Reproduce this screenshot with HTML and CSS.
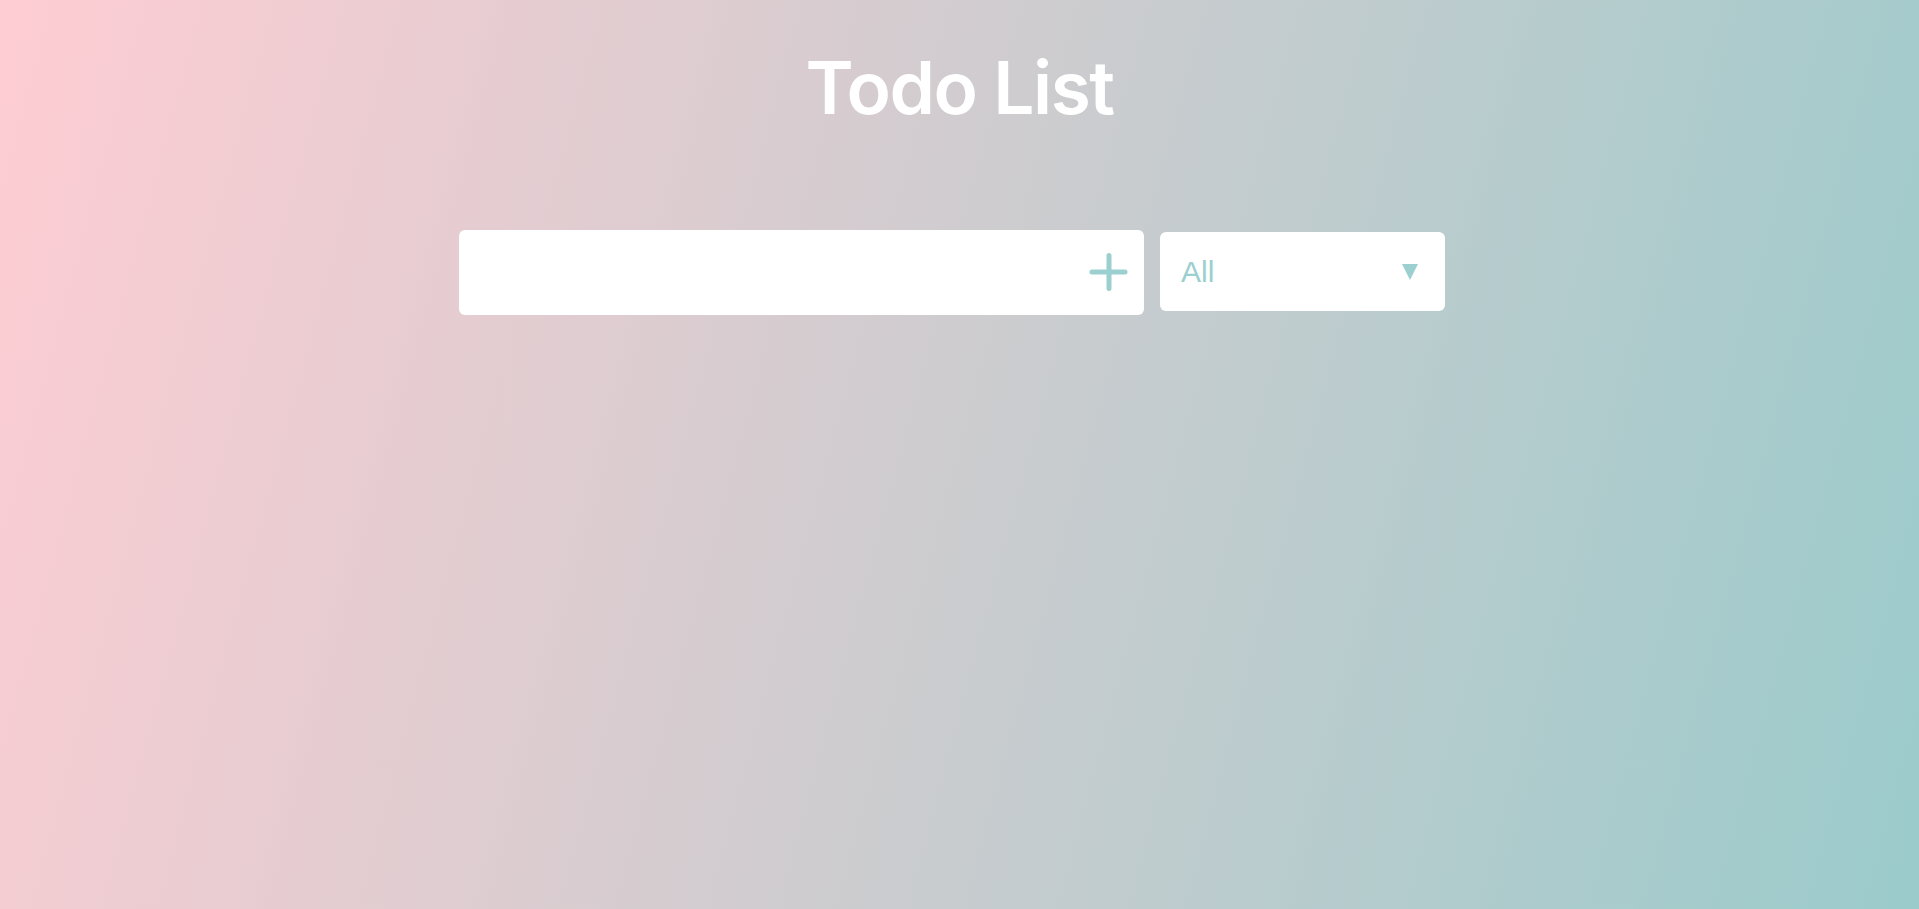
FILE: index.html
```html
<!DOCTYPE html>
<html lang="en">
<head>
<meta charset="utf-8">
<title>Todo List</title>
<link rel="stylesheet" href="styles.css">
</head>
<body>
<header class="header">
  <h1 class="title">Todo List</h1>
</header>
<form class="todo-form">
  <div class="input-box">
    <input class="todo-input" type="text" aria-label="New todo">
    <button class="add-btn" type="button" aria-label="Add">
      <svg width="40" height="40" viewBox="0 0 40 40"><path d="M20 2.5V35.5M3 19H36" stroke="#9bcfd0" stroke-width="5" stroke-linecap="round" fill="none"/></svg>
    </button>
  </div>
  <div class="select-box">
    <span class="select-value">All</span>
    <span class="select-arrow">
      <svg width="16" height="16" viewBox="0 0 16 16"><path d="M0 0H16L8 16Z" fill="#9bcfd0"/></svg>
    </span>
  </div>
</form>
</body>
</html>
```

FILE: styles.css
```css
* { box-sizing: border-box; }
html, body { margin: 0; padding: 0; }
body {
  min-height: 909px;
  background: linear-gradient(105deg, #fecdd3 0%, #9bcbcb 100%);
  font-family: "Inter", "Liberation Sans", sans-serif;
}
.header {
  display: flex;
  justify-content: center;
  padding-top: 44px;
  height: 230px;
}
.title {
  margin: 0;
  color: #ffffff;
  font-size: 73px;
  font-weight: 600;
  letter-spacing: -1.5px;
  line-height: 88px;
}
.todo-form {
  display: flex;
  justify-content: center;
  align-items: center;
  gap: 16px;
  padding-right: 15px;
}
.input-box {
  width: 685px;
  height: 85px;
  background: #ffffff;
  border-radius: 6px;
  display: flex;
  align-items: center;
}
.todo-input {
  flex: 1;
  height: 100%;
  border: none;
  outline: none;
  background: transparent;
  font-size: 28px;
  padding: 0 20px;
}
.add-btn {
  width: 40px;
  height: 40px;
  padding: 0;
  margin-right: 15px;
  border: none;
  background: transparent;
  display: flex;
}
.select-box {
  width: 285px;
  height: 79px;
  margin-bottom: 2px;
  background: #ffffff;
  border-radius: 6px;
  display: flex;
  align-items: center;
  justify-content: space-between;
  padding: 0 27px 0 21px;
}
.select-value {
  font-family: "Liberation Sans", Arial, sans-serif;
  font-size: 30px;
  color: #9bcfd0;
}
.select-arrow { display: flex; }
```
